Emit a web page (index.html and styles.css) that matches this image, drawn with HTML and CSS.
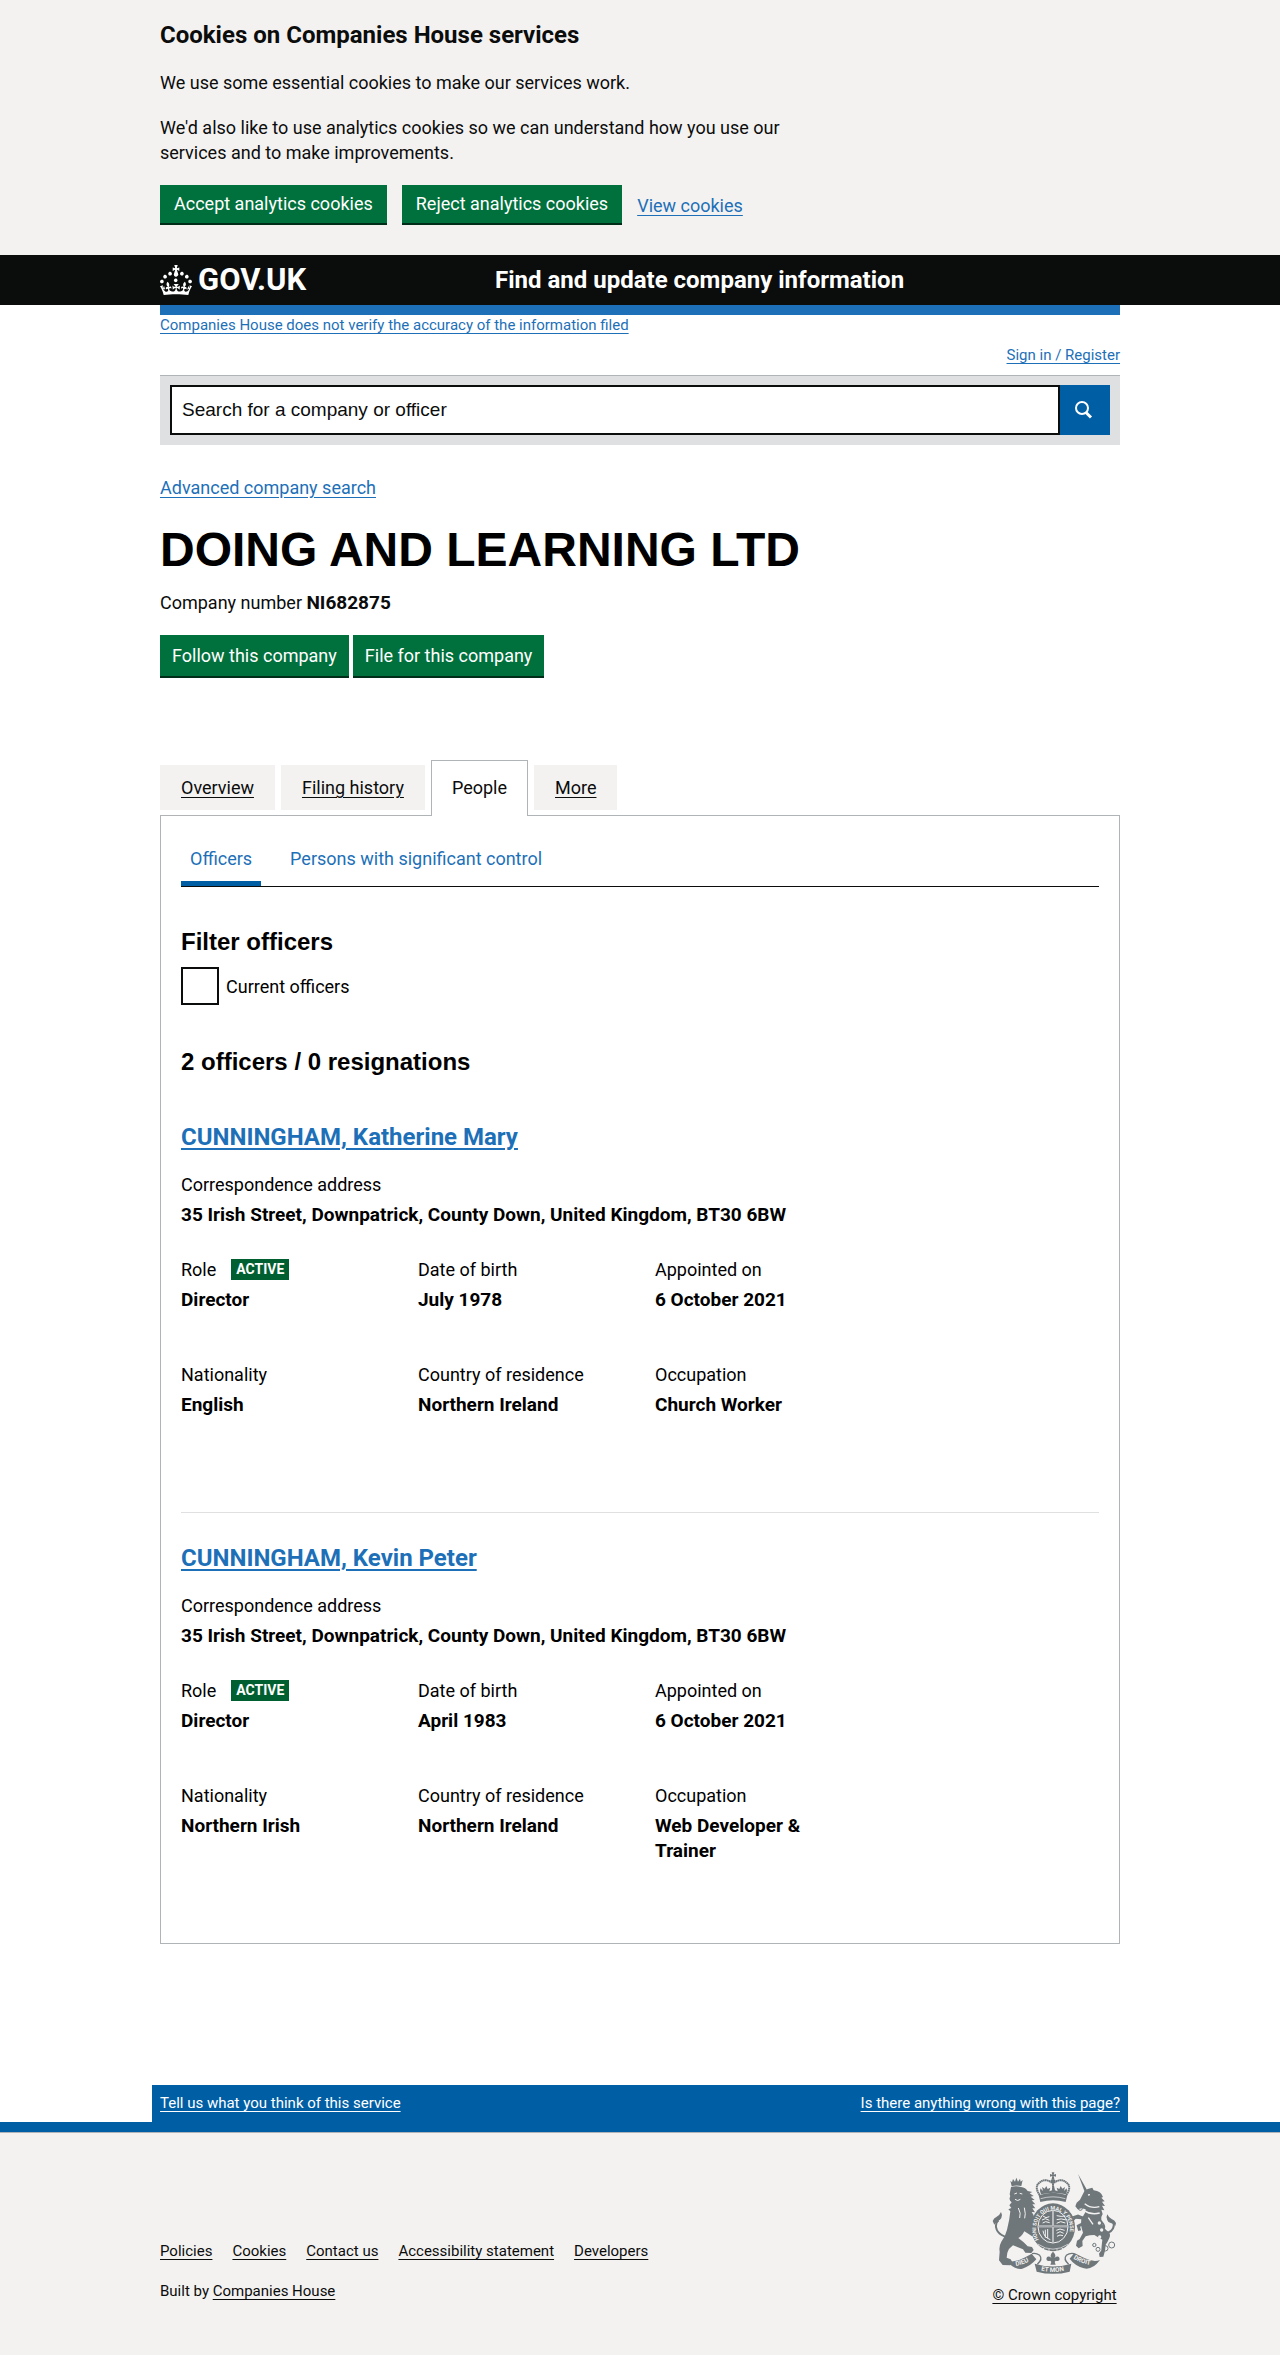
FILE: index.html
```html
<!DOCTYPE html>
<html lang="en">
<head>
<meta charset="utf-8">
<meta name="viewport" content="width=device-width, initial-scale=1">
<title>DOING AND LEARNING LTD people - Find and update company information - GOV.UK</title>
<link rel="stylesheet" href="styles.css">
</head>
<body>
<section class="cookie-banner" aria-label="Cookies on Companies House services">
  <div class="container">
    <h2 class="cookie-title">Cookies on Companies House services</h2>
    <p class="cookie-text">We use some essential cookies to make our services work.</p>
    <p class="cookie-text">We'd also like to use analytics cookies so we can understand how you use our services and to make improvements.</p>
    <div class="cookie-actions">
      <button class="button" type="button">Accept analytics cookies</button>
      <button class="button" type="button">Reject analytics cookies</button>
      <a class="link" href="#">View cookies</a>
    </div>
  </div>
</section>

<header class="header">
  <div class="container header-inner">
    <a class="logo" href="#">
      <svg class="crown" viewBox="0 0 32 30" width="32" height="30" aria-hidden="true"><path fill="currentColor" fill-rule="evenodd" d="M22.6 10.4c-1 .4-2-.1-2.4-1-.4-.9.1-2 1-2.4.9-.4 2 .1 2.4 1s-.1 2-1 2.4m4.9 3c-1 .4-2-.1-2.4-1-.4-.9.1-2 1-2.4.9-.4 2 .1 2.4 1s0 2-1 2.4m3.3 4.8c-1 .4-2-.1-2.4-1-.4-.9.1-2 1-2.4.9-.4 2 .1 2.4 1s-.1 2-1 2.4m-14.4-1.1c-.9.4-2-.1-2.4-1-.4-.9.1-2 1-2.4.9-.4 2 .1 2.4 1s-.1 2-1 2.4M17 4.7l2.3 1.2V2.5l-2.3.7-.2-.2.9-3h-3.4l.9 3-.2.2-2.3-.7v3.4L15 4.7c.1.1.1.2.2.2l-1.3 4c-.1.2-.1.4-.1.6 0 1.1.8 2 1.900 2.200h.7c1-.2 1.900-1.100 1.900-2.100 0-.2 0-.4-.1-.6l-1.300-4c-.1-.2 0-.2.1-.3m-7.600 5.700c.9.4 2-.1 2.400-1 .4-.9-.1-2-1-2.400-.9-.4-2 .1-2.400 1s0 2 1 2.400m-5 3c.9.4 2-.1 2.400-1 .4-.9-.1-2-1-2.400-.9-.4-2 .1-2.400 1s.1 2 1 2.400m-3.200 4.800c.9.4 2-.1 2.400-1 .4-.9-.1-2-1-2.400-.9-.4-2 .1-2.400 1s0 2 1 2.400m14.800 11c4.400 0 8.600.3 12.300.8 1.100-4.500 2.400-7 3.700-8.800l-2.500-.9c.2 1.300.3 1.900 0 2.700-.4-.4-.8-1.100-1.100-2.300l-1.200 4c.7-.5 1.300-.8 2-.9-1.100 2.500-2.600 3.100-3.500 3-1.100-.2-1.700-1.200-1.500-2.100.3-1.200 1.500-1.500 2.100-.1 1.100-2.300-.8-3-2-2.300 1.900-1.900 2.100-3.500.6-5.600-2.100 1.600-2.100 3.200-1.200 5.500-1.200-1.400-3.200-.6-2.500 1.600.9-1.400 2.100-.5 1.900.8-.2 1.100-1.700 2.100-3.500 1.900-2.700-.2-2.900-2.100-2.900-3.600.7-.1 1.900.5 2.900 1.900l.4-4.300c-1.100 1.100-2.100 1.400-3.200 1.400.4-1.200 2.100-3 2.100-3h-5.400s1.700 1.900 2.100 3c-1.100 0-2.100-.2-3.200-1.400l.4 4.300c1-1.400 2.200-2 2.900-1.900-.1 1.500-.2 3.400-2.900 3.600-1.900.2-3.400-.8-3.500-1.900-.2-1.300 1-2.200 1.900-.8.7-2.300-1.200-3-2.500-1.600.9-2.200.9-3.900-1.200-5.500-1.500 2-1.300 3.700.6 5.600-1.200-.7-3.100 0-2 2.300.6-1.400 1.800-1.100 2.100.1.2.9-.3 1.900-1.500 2.100-.9.2-2.400-.5-3.500-3 .6 0 1.200.3 2 .9l-1.200-4c-.3 1.100-.7 1.900-1.100 2.300-.3-.8-.2-1.400 0-2.700l-2.900.9C1.300 23 2.600 25.500 3.700 30c3.700-.5 7.900-.8 12.300-.8"/></svg>
      <span class="logo-text">GOV.UK</span>
    </a>
    <a class="service-name" href="#">Find and update company information</a>
  </div>
</header>

<main class="container main">
  <div class="phase-bar"><a class="link link-small" href="#">Companies House does not verify the accuracy of the information filed</a></div>
  <div class="account"><a class="link link-small" href="#">Sign in / Register</a></div>

  <form class="search" role="search">
    <input class="search-input" type="text" aria-label="Search for a company or officer" placeholder="Search for a company or officer">
    <button class="search-button" type="button" aria-label="Search">
      <svg viewBox="0 0 20 20" width="20" height="20" aria-hidden="true"><circle cx="9" cy="8" r="6" fill="none" stroke="currentColor" stroke-width="2"/><path d="M13 12.500l5 5" stroke="currentColor" stroke-width="3"/></svg>
    </button>
  </form>
  <p class="advanced"><a class="link" href="#">Advanced company search</a></p>

  <h1 class="company-name">DOING AND LEARNING LTD</h1>
  <p class="company-number">Company number <strong>NI682875</strong></p>
  <div class="company-actions">
    <a class="button button-tall" href="#">Follow this company</a>
    <a class="button button-tall" href="#">File for this company</a>
  </div>

  <nav class="tabs" aria-label="Company">
    <a class="tab" href="#">Overview</a>
    <a class="tab" href="#">Filing history</a>
    <a class="tab tab-selected" href="#" aria-current="page">People</a>
    <a class="tab" href="#">More</a>
  </nav>

  <div class="panel">
    <nav class="subnav" aria-label="People">
      <a class="subnav-link subnav-selected" href="#">Officers</a>
      <a class="subnav-link" href="#">Persons with significant control</a>
    </nav>

    <h2 class="filter-title">Filter officers</h2>
    <div class="filter">
      <input class="checkbox" type="checkbox" id="current">
      <label for="current">Current officers</label>
    </div>
    <h2 class="officer-count">2 officers / 0 resignations</h2>

    <section class="officer">
      <h2 class="officer-name"><a href="#">CUNNINGHAM, Katherine Mary</a></h2>
      <dl class="address">
        <dt>Correspondence address</dt>
        <dd>35 Irish Street, Downpatrick, County Down, United Kingdom, BT30 6BW</dd>
      </dl>
      <dl class="details">
        <div><dt>Role <span class="tag">ACTIVE</span></dt><dd>Director</dd></div>
        <div><dt>Date of birth</dt><dd>July 1978</dd></div>
        <div><dt>Appointed on</dt><dd>6 October 2021</dd></div>
        <div><dt>Nationality</dt><dd>English</dd></div>
        <div><dt>Country of residence</dt><dd>Northern Ireland</dd></div>
        <div><dt>Occupation</dt><dd>Church Worker</dd></div>
      </dl>
    </section>

    <section class="officer">
      <h2 class="officer-name"><a href="#">CUNNINGHAM, Kevin Peter</a></h2>
      <dl class="address">
        <dt>Correspondence address</dt>
        <dd>35 Irish Street, Downpatrick, County Down, United Kingdom, BT30 6BW</dd>
      </dl>
      <dl class="details">
        <div><dt>Role <span class="tag">ACTIVE</span></dt><dd>Director</dd></div>
        <div><dt>Date of birth</dt><dd>April 1983</dd></div>
        <div><dt>Appointed on</dt><dd>6 October 2021</dd></div>
        <div><dt>Nationality</dt><dd>Northern Irish</dd></div>
        <div><dt>Country of residence</dt><dd>Northern Ireland</dd></div>
        <div><dt>Occupation</dt><dd>Web Developer &amp; Trainer</dd></div>
      </dl>
    </section>
  </div>
</main>

<div class="feedback">
  <a href="#">Tell us what you think of this service</a>
  <a href="#">Is there anything wrong with this page?</a>
</div>

<footer class="footer">
  <div class="container footer-inner">
    <div>
      <ul class="footer-links">
        <li><a href="#">Policies</a></li>
        <li><a href="#">Cookies</a></li>
        <li><a href="#">Contact us</a></li>
        <li><a href="#">Accessibility statement</a></li>
        <li><a href="#">Developers</a></li>
      </ul>
      <p class="built-by">Built by <a href="#">Companies House</a></p>
    </div>
    <a class="copyright" href="#">
      <svg class="arms" viewBox="21 24 375 306" width="125" height="102" aria-hidden="true">
        <defs>
          <path id="garter" d="M163 230A51 58 0 1 1 245 230"/>
          <path id="dieu" d="M93 306Q118 302 142 286"/>
          <path id="mon" d="M162 318Q204 330 250 317"/>
          <path id="droit" d="M265 283Q290 300 320 303"/>
        </defs>
        <!-- lion -->
        <g class="ink">
          <path d="M76 50l5 5 3-10 6 8 4-12 5 12 6-9 2 9 6-5-4 18q-15-4-29 1z"/>
          <path d="M78 69q14-5 30 0 14 2 20 12l14 3-8 4 12 8-9 2 12 10-9 1 11 12-9 0 9 12-9 0 8 12-10-1q10 12 7 24 8 6 5 14l9 6 0 14 8 8-8 9-12-7-8 5-10-7-13-8q-8 16-18 20l16 13 12 12 13 2 5 9-7 9-18-1-7-10-30-12q-13 9-17 22l-2 15 12 5 6 10-7 8-23-1-11-14 2-26q-3-16 5-30 12-15 17-36 8-31 10-55l-6-6 9-4-6-8 7-9q-8-6-6-14 3-4 0-10z"/>
          <path d="M23 171q3-9 12-13 9-4 13-14 5 8 1 18-3 7-10 8l3 4q-9-1-14 8z"/>
        </g>
        <path class="line" d="M40 168c-12 12-9 34 10 45 24 14 34 1 26-6-8-8 10-30 24-40" stroke-width="6"/>
        <path class="cut" d="M88 90l8-3m8 1l8 2m-22 16q8 7 16 0M100 132q9 16 4 30m14-31q5 20 1 32M80 250q-6 12-4 28" stroke-width="3"/>
        <!-- unicorn -->
        <g class="ink">
          <path d="M279 30l27 48-7 5z"/>
          <path d="M298 82l10-7 14-4 4 8q22 2 28 20l-5 2 10 11-8 1 9 13-9-1 7 14-9-2 4 13q-6 8-4 20 4 22 22 34 7 8 2 18-5 12-11 20l-2 18-5 18-11 1-2-10 7-10 1-14 2-18-24-14q-14 0-26 4l-10 14 1 15-12 7-8-8 3-15 8-5 10-19q-8-22-5-40l-17-2-8 9 0 15-9 5-12-10-3-9-11-9-2-16 9-6 10 6 10-2 11 15 14-6 12 2q9-10 9-22l-12-3-12 3-7-9 4-11 10-9z"/>
          <path d="M393 177q-4-9-13-12-9-4-13-14-5 8 0 18 3 8 10 8 8 0 14 9z"/>
        </g>
        <path class="line" d="M383 172c9 15-2 31-14 34-14 5-24-3-15-10 10-8-3-22-12-30" stroke-width="6"/>
        <path class="line" d="M297 164l-18-8-14 5M296 178l-16 8 4 14" stroke-width="9"/>
        <path class="cut" d="M299 119q20 16 44 9M296 139q22 15 48 8M309 93l6-1m-5 69l14 20" stroke-width="4"/>
        <g class="line" stroke-width="3"><circle cx="286" cy="133" r="6"/><circle cx="328" cy="243" r="5"/><circle cx="339" cy="256" r="6"/><circle cx="361" cy="253" r="8"/><circle cx="380" cy="243" r="9"/></g>
        <g class="paper"><circle cx="343" cy="177" r="5"/><circle cx="350" cy="198" r="5"/><circle cx="344" cy="219" r="5"/></g>
        <!-- royal crown -->
        <g class="ink">
          <path d="M200 25h8l-2 7 7-2v8l-7-2 2 9h-8l2-9-7 2v-8l7 2z"/><circle cx="204" cy="52" r="7"/>
          <path d="M161 94q43-15 86 0l-5 20q-38-11-76 0z"/>
          <path d="M168 91q-5-10-2-18l8 8-3-12 8 5 5-8 4 9 8-4-3 11 8-3 3-14h3l3 14 8 3-3-11 8 4 4-9 5 8 8-5-3 12 8-8q3 8-2 18-37-9-75 0z"/>
        </g>
        <path class="line dots" d="M164 93q-15-22-4-34 18-19 41-3M244 93q15-22 4-34-18-19-41-3M204 58v22" stroke-width="6"/>
        <path class="cut" d="M167 104q37-11 74 0" stroke-width="2"/>
        <!-- shield and garter -->
        <ellipse class="ink" cx="204" cy="190" rx="66" ry="72"/>
        <ellipse class="cut" cx="204" cy="188" rx="45" ry="49" stroke-width="3"/>
        <path class="cut" d="M204 139v98M160 187h88" stroke-width="5"/>
        <path class="line" d="M204 139v98M160 187h88" stroke-width="2"/>
        <path class="cut" d="M174 156l9 5 10-3m-22 10l10-4 12 5m-20 8l9-4 12 3M215 155q14 4 26 1m-26 11q13-5 29 1m-29 10l12-5 14 4M174 200q2 20 22 27m-15-30v24m7-26v28M214 199l11-4 14 4m-24 9l10-5 11 5m-20 9l9-4 9 2" stroke-width="3"/>
        <path class="cut" d="M158 240q46 31 92 0" stroke-width="2"/>
        <g class="paper"><circle cx="176" cy="254" r="2"/><circle cx="192" cy="258" r="2"/><circle cx="216" cy="258" r="2"/><circle cx="232" cy="254" r="2"/></g>
        <!-- ribbon -->
        <path class="ink" d="M63 288q18 10 46-3 22-10 31-16l14 17q-17 20-42 28-25 5-49-26z"/>
        <path class="ink" d="M345 288q-18 8-45-5-21-10-32-16l-14 17q15 21 43 29 25 6 48-25z"/>
        <path class="ink" d="M149 299q55 17 110 0l-5 24q-50 13-99 0z"/>
        <path class="line" d="M141 269q12-3 23 5 10 11-7 27M267 269q-12-3-23 5-10 11 7 27" stroke-width="4"/>
        <path class="ink" d="M204 263q12 11 4 19 14-10 16 3-1 9-12 5l-3 4 3 8h-16l3-8-3-4q-11 4-12-5 2-13 16-3-8-8 4-19z"/>
        <g class="motto">
          <text><textPath href="#garter" startOffset="3">HONI SOIT QUI MAL Y PENSE</textPath></text>
          <text class="motto-large"><textPath href="#dieu">DIEU</textPath></text>
          <text class="motto-large"><textPath href="#mon" startOffset="6">ET MON</textPath></text>
          <text class="motto-large"><textPath href="#droit">DROIT</textPath></text>
        </g>
      </svg>
      <span>© Crown copyright</span>
    </a>
  </div>
</footer>
</body>
</html>
```
FILE: styles.css
```css
*,
*::before,
*::after {
  box-sizing: border-box;
}

body {
  margin: 0;
  background: #fff;
  color: #0b0c0c;
  font-family: Roboto, "Liberation Sans", sans-serif;
  font-size: 18px;
  line-height: 25px;
}

h1,
h2,
p,
dl,
dd,
ul {
  margin: 0;
}

a {
  text-underline-offset: 3px;
}

.container {
  max-width: 960px;
  margin: 0 auto;
}

.link {
  color: #1d70b8;
}

.link-small {
  font-size: 15px;
  line-height: 20px;
}

/* Buttons */
.button {
  height: 40px;
  padding: 0 14px;
  border: 0;
  border-bottom: 2px solid #002d18;
  border-radius: 0;
  background: #00703c;
  color: #fff;
  font: inherit;
  line-height: 38px;
  text-decoration: none;
}

.button-tall {
  height: 43px;
  padding: 0 12px;
  line-height: 41px;
}

/* Cookie banner */
.cookie-banner {
  padding: 20px 0 30px;
  background: #f3f2f1;
}

.cookie-title {
  margin-bottom: 20px;
  font-size: 24px;
  line-height: 30px;
}

.cookie-text {
  max-width: 640px;
  margin-bottom: 20px;
}

.cookie-actions {
  display: flex;
  align-items: center;
  gap: 15px;
}

/* Header */
.header {
  background: #0b0c0c;
  color: #fff;
}

.header-inner {
  display: grid;
  grid-template-columns: 335px 1fr;
  align-items: center;
  min-height: 50px;
}

.logo {
  display: flex;
  align-items: center;
  gap: 6px;
  color: inherit;
  text-decoration: none;
}

.logo-text {
  font-size: 31px;
  font-weight: 700;
  line-height: 30px;
}

.service-name {
  color: inherit;
  font-size: 24px;
  font-weight: 700;
  line-height: 30px;
  text-decoration: none;
}

/* Account bar and search */
.phase-bar {
  display: flex;
  border-top: 10px solid #1d70b8;
}

.account {
  display: flex;
  justify-content: flex-end;
  margin: 10px 0;
}

.search {
  display: flex;
  padding: 9px 10px 10px;
  border-top: 1px solid #b1b4b6;
  background: #dee0e2;
}

.search-input {
  flex: 1;
  min-width: 0;
  height: 50px;
  padding: 0 10px;
  border: 2px solid #0b0c0c;
  border-radius: 0;
  background: #fff;
  color: #0b0c0c;
  font-family: "Liberation Sans", Arial, sans-serif;
  font-size: 19px;
}

.search-input::placeholder {
  color: #0b0c0c;
  opacity: 1;
}

.search-button {
  display: grid;
  place-items: center;
  width: 50px;
  height: 50px;
  padding: 0 4px 0 0;
  border: 0;
  background: #005ea5;
  color: #fff;
}

.advanced {
  margin-top: 30px;
}

/* Company heading */
.company-name {
  margin: 25px 0 15px;
  color: #000;
  font-family: "Liberation Sans", Arial, sans-serif;
  font-size: 48px;
  line-height: 50px;
}

.company-number strong {
  font-size: 19px;
}

.company-actions {
  display: flex;
  gap: 4px;
  margin-top: 20px;
}

/* Tabs */
.tabs {
  display: flex;
  align-items: flex-end;
  gap: 6px;
  margin-top: 82px;
}

.tab {
  margin-bottom: 5px;
  padding: 10px 21px;
  background: #f3f2f1;
  color: #0b0c0c;
}

.tab-selected {
  position: relative;
  margin-bottom: -1px;
  padding: 14px 20px 16px;
  border: 1px solid #b1b4b6;
  border-bottom: 0;
  background: #fff;
  text-decoration: none;
}

.panel {
  padding: 20px 20px 60px;
  border: 1px solid #b1b4b6;
  color: #000;
}

.subnav {
  display: flex;
  gap: 20px;
  border-bottom: 1px solid #0b0c0c;
}

.subnav-link {
  padding: 10px 9px;
  border-bottom: 5px solid transparent;
  color: #1d70b8;
  text-decoration: none;
}

.subnav-selected {
  border-bottom-color: #005ea5;
}

/* Filter */
.filter-title,
.officer-count {
  font-family: "Liberation Sans", Arial, sans-serif;
  font-size: 24px;
  line-height: 30px;
}

.filter-title {
  margin: 40px 0 10px;
}

.filter {
  display: flex;
  align-items: center;
  gap: 7px;
}

.checkbox {
  width: 38px;
  height: 38px;
  margin: 0;
  border: 2px solid #0b0c0c;
  background: #fff;
  appearance: none;
}

.checkbox:checked {
  background: #0b0c0c;
  box-shadow: inset 0 0 0 6px #fff;
}

.officer-count {
  margin: 42px 0 45px;
}

/* Officers */
.officer + .officer {
  margin-top: 95px;
  padding-top: 30px;
  border-top: 1px solid #dee0e2;
}

.officer:last-child {
  padding-bottom: 20px;
}

.officer-name {
  margin-bottom: 20px;
  font-size: 24px;
  line-height: 30px;
}

.officer-name a {
  color: #1d70b8;
  text-decoration-thickness: 2px;
}

dt {
  display: flex;
  align-items: center;
  gap: 15px;
  margin-bottom: 5px;
}

dd {
  font-size: 19px;
  font-weight: 700;
}

.address {
  margin-bottom: 30px;
}

.details {
  display: grid;
  grid-template-columns: 237px 237px 160px;
  row-gap: 50px;
}

.tag {
  padding: 0 5px;
  background: #005f30;
  color: #fff;
  font-size: 14px;
  font-weight: 700;
  line-height: 21px;
}

/* Footer */
.feedback {
  display: flex;
  justify-content: space-between;
  max-width: 976px;
  margin: 141px auto 0;
  padding: 8px 8px 9px;
  background: #005ea5;
  font-size: 15px;
  line-height: 20px;
}

.feedback a {
  color: #fff;
}

.footer {
  padding: 40px 0 50px;
  border-top: 10px solid #005ea5;
  background: #f3f2f1;
  box-shadow: inset 0 1px #b1b4b6;
  font-size: 15px;
  line-height: 20px;
}

.footer a {
  color: #0b0c0c;
}

.footer-inner {
  display: flex;
  align-items: flex-end;
  justify-content: space-between;
}

.footer-links {
  display: flex;
  gap: 20px;
  padding: 0;
  list-style: none;
}

.built-by {
  margin: 20px 0 4px;
}

.copyright {
  display: flex;
  flex-direction: column;
  align-items: center;
  gap: 11px;
  min-width: 131px;
}

.ink {
  fill: #6f777b;
}

.paper {
  fill: #f3f2f1;
}

.line {
  fill: none;
  stroke: #6f777b;
}

.dots {
  stroke-dasharray: 5 1;
}

.cut {
  fill: none;
  stroke: #f3f2f1;
}

.motto {
  fill: #f3f2f1;
  font-size: 16px;
  font-weight: 700;
}

.motto-large {
  font-size: 19px;
}
```
